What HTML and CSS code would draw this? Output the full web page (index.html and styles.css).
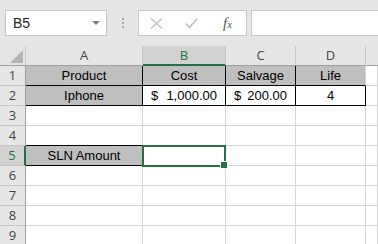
FILE: index.html
```html
<!DOCTYPE html>
<html lang="en">
<head>
    <meta charset="UTF-8">
    <title>SLN</title>
    <link rel="stylesheet" href="styles.css">
</head>
<body>
    <!-- Строка формул -->
    <div class="toolbar">
        <div class="name-box">
            <span>B5</span>
            <span class="caret"></span>
        </div>
        <div class="grip"><i></i><i></i><i></i></div>
        <div class="fx-box">
            <svg class="btn-x" width="13" height="11" viewBox="0 0 13 11"><path d="M1 0.5 L12 10.5 M12 0.5 L1 10.5" fill="none" stroke="#c3c3c3" stroke-width="1.4"/></svg>
            <svg class="btn-ok" width="13" height="11" viewBox="0 0 13 11"><path d="M0.8 5.5 L4.5 9.5 L12.2 0.8" fill="none" stroke="#c3c3c3" stroke-width="1.6"/></svg>
            <span class="fx">f<sub>x</sub></span>
        </div>
        <div class="formula"></div>
    </div>

    <!-- Лист -->
    <div class="sheet-wrap">
        <div class="sheet">
            <div class="hd corner"><span class="tri"></span></div>
            <div class="hd">A</div>
            <div class="hd sel-col">B</div>
            <div class="hd">C</div>
            <div class="hd">D</div>
            <div class="hd last"></div>

            <div class="rh">1</div>
            <div class="c fill b-all center">Product</div>
            <div class="c fill b-all center">Cost</div>
            <div class="c fill b-all center">Salvage</div>
            <div class="c fill b-bot center">Life</div>
            <div class="c"></div>

            <div class="rh">2</div>
            <div class="c fill b-all center">Iphone</div>
            <div class="c b-all money"><span>$</span><span>1,000.00</span></div>
            <div class="c b-all money"><span>$</span><span>200.00</span></div>
            <div class="c b-all center">4</div>
            <div class="c"></div>

            <div class="rh">3</div>
            <div class="c"></div><div class="c"></div><div class="c"></div><div class="c"></div><div class="c"></div>

            <div class="rh">4</div>
            <div class="c b-bot"></div><div class="c"></div><div class="c"></div><div class="c"></div><div class="c"></div>

            <div class="rh sel-row">5</div>
            <div class="c fill b-all center">SLN Amount</div>
            <div class="c"></div><div class="c"></div><div class="c"></div><div class="c"></div>

            <div class="rh">6</div>
            <div class="c"></div><div class="c"></div><div class="c"></div><div class="c"></div><div class="c"></div>

            <div class="rh">7</div>
            <div class="c"></div><div class="c"></div><div class="c"></div><div class="c"></div><div class="c"></div>

            <div class="rh">8</div>
            <div class="c"></div><div class="c"></div><div class="c"></div><div class="c"></div><div class="c"></div>

            <div class="rh">9</div>
            <div class="c"></div><div class="c"></div><div class="c"></div><div class="c"></div><div class="c"></div>
        </div>
        <div class="selection"><span class="handle"></span></div>
    </div>
</body>
</html>
```

FILE: styles.css
```css
/* Общие стили */
body {
    margin: 0;
    padding: 0;
    background-color: #fff;
    font-family: 'Liberation Sans', Arial, sans-serif;
    color: #000;
    overflow: hidden;
}

.toolbar {
    height: 46px;
    background-color: #e6e6e6;
    display: flex;
    align-items: flex-start;
    padding: 10px 0 0 5px;
    box-sizing: border-box;
}

.name-box {
    width: 102px;
    height: 26px;
    box-sizing: border-box;
    background-color: #fff;
    border: 1px solid #c6c6c6;
    display: flex;
    align-items: center;
    justify-content: space-between;
    padding: 0 6px 0 7px;
    font-size: 14px;
    color: #222;
}

.caret {
    width: 0;
    height: 0;
    border-left: 4px solid transparent;
    border-right: 4px solid transparent;
    border-top: 4px solid #7a7a7a;
}

.grip {
    width: 31px;
    height: 26px;
    display: flex;
    flex-direction: column;
    align-items: center;
    justify-content: center;
    gap: 2px;
}

.grip i {
    width: 2px;
    height: 2px;
    background-color: #a6a6a6;
}

.fx-box {
    width: 109px;
    height: 26px;
    box-sizing: border-box;
    background-color: #fff;
    border: 1px solid #c6c6c6;
    display: flex;
    align-items: center;
}

.btn-x {
    margin-left: 11px;
}

.btn-ok {
    margin-left: 22px;
}

.fx {
    margin-left: 25px;
    font-family: 'Liberation Serif', serif;
    font-style: italic;
    font-size: 15px;
    color: #555;
}

.fx sub {
    font-size: 11px;
    vertical-align: 0;
}

.formula {
    flex: 1;
    height: 26px;
    margin-left: 4px;
    box-sizing: border-box;
    background-color: #fff;
    border: 1px solid #c6c6c6;
    border-right: none;
}

.sheet-wrap {
    position: relative;
}

.sheet {
    display: grid;
    grid-template-columns: 26px 117px 83px 70px 70px 1fr;
    grid-auto-rows: 20px;
}

.sheet > div {
    box-sizing: border-box;
    border-right: 1px solid #d4d4d4;
    border-bottom: 1px solid #d4d4d4;
}

.hd {
    background-color: #e6e6e6;
    border-right-color: #c8c8c8 !important;
    border-bottom-color: #9f9f9f !important;
    font-family: 'Open Sans', sans-serif;
    font-size: 13px;
    color: #444;
    text-align: center;
    line-height: 19px;
}

.hd.last {
    border-right: none !important;
}

.corner {
    position: relative;
}

.tri {
    position: absolute;
    right: 2px;
    bottom: 2px;
    width: 0;
    height: 0;
    border-left: 13px solid transparent;
    border-bottom: 13px solid #b4b4b4;
}

.sel-col {
    background-color: #d2d2d2;
    border-bottom: 2px solid #217346 !important;
    color: #217346;
    line-height: 18px;
}

.rh {
    background-color: #e6e6e6;
    border-right-color: #9f9f9f !important;
    border-bottom-color: #c8c8c8 !important;
    font-family: 'Open Sans', sans-serif;
    font-size: 13px;
    color: #444;
    text-align: center;
    line-height: 19px;
}

.sel-row {
    background-color: #d2d2d2;
    border-right: 2px solid #217346 !important;
    color: #217346;
}

.c {
    font-size: 13px;
    line-height: 20px;
    padding: 0 3px;
    white-space: nowrap;
    color: #000;
}

.fill {
    background-color: #bfbfbf;
}

.center {
    text-align: center;
}

.b-all {
    border-right-color: #000 !important;
    border-bottom-color: #000 !important;
}

.b-bot {
    border-bottom-color: #000 !important;
}

.money {
    display: flex;
    justify-content: space-between;
    padding: 0 8px 0 8px;
}

.selection {
    position: absolute;
    left: 142px;
    top: 99px;
    width: 84px;
    height: 22px;
    box-sizing: border-box;
    border: 2px solid #217346;
}

.handle {
    position: absolute;
    right: -4px;
    bottom: -4px;
    width: 6px;
    height: 6px;
    background-color: #217346;
    border: 1px solid #fff;
}
```
